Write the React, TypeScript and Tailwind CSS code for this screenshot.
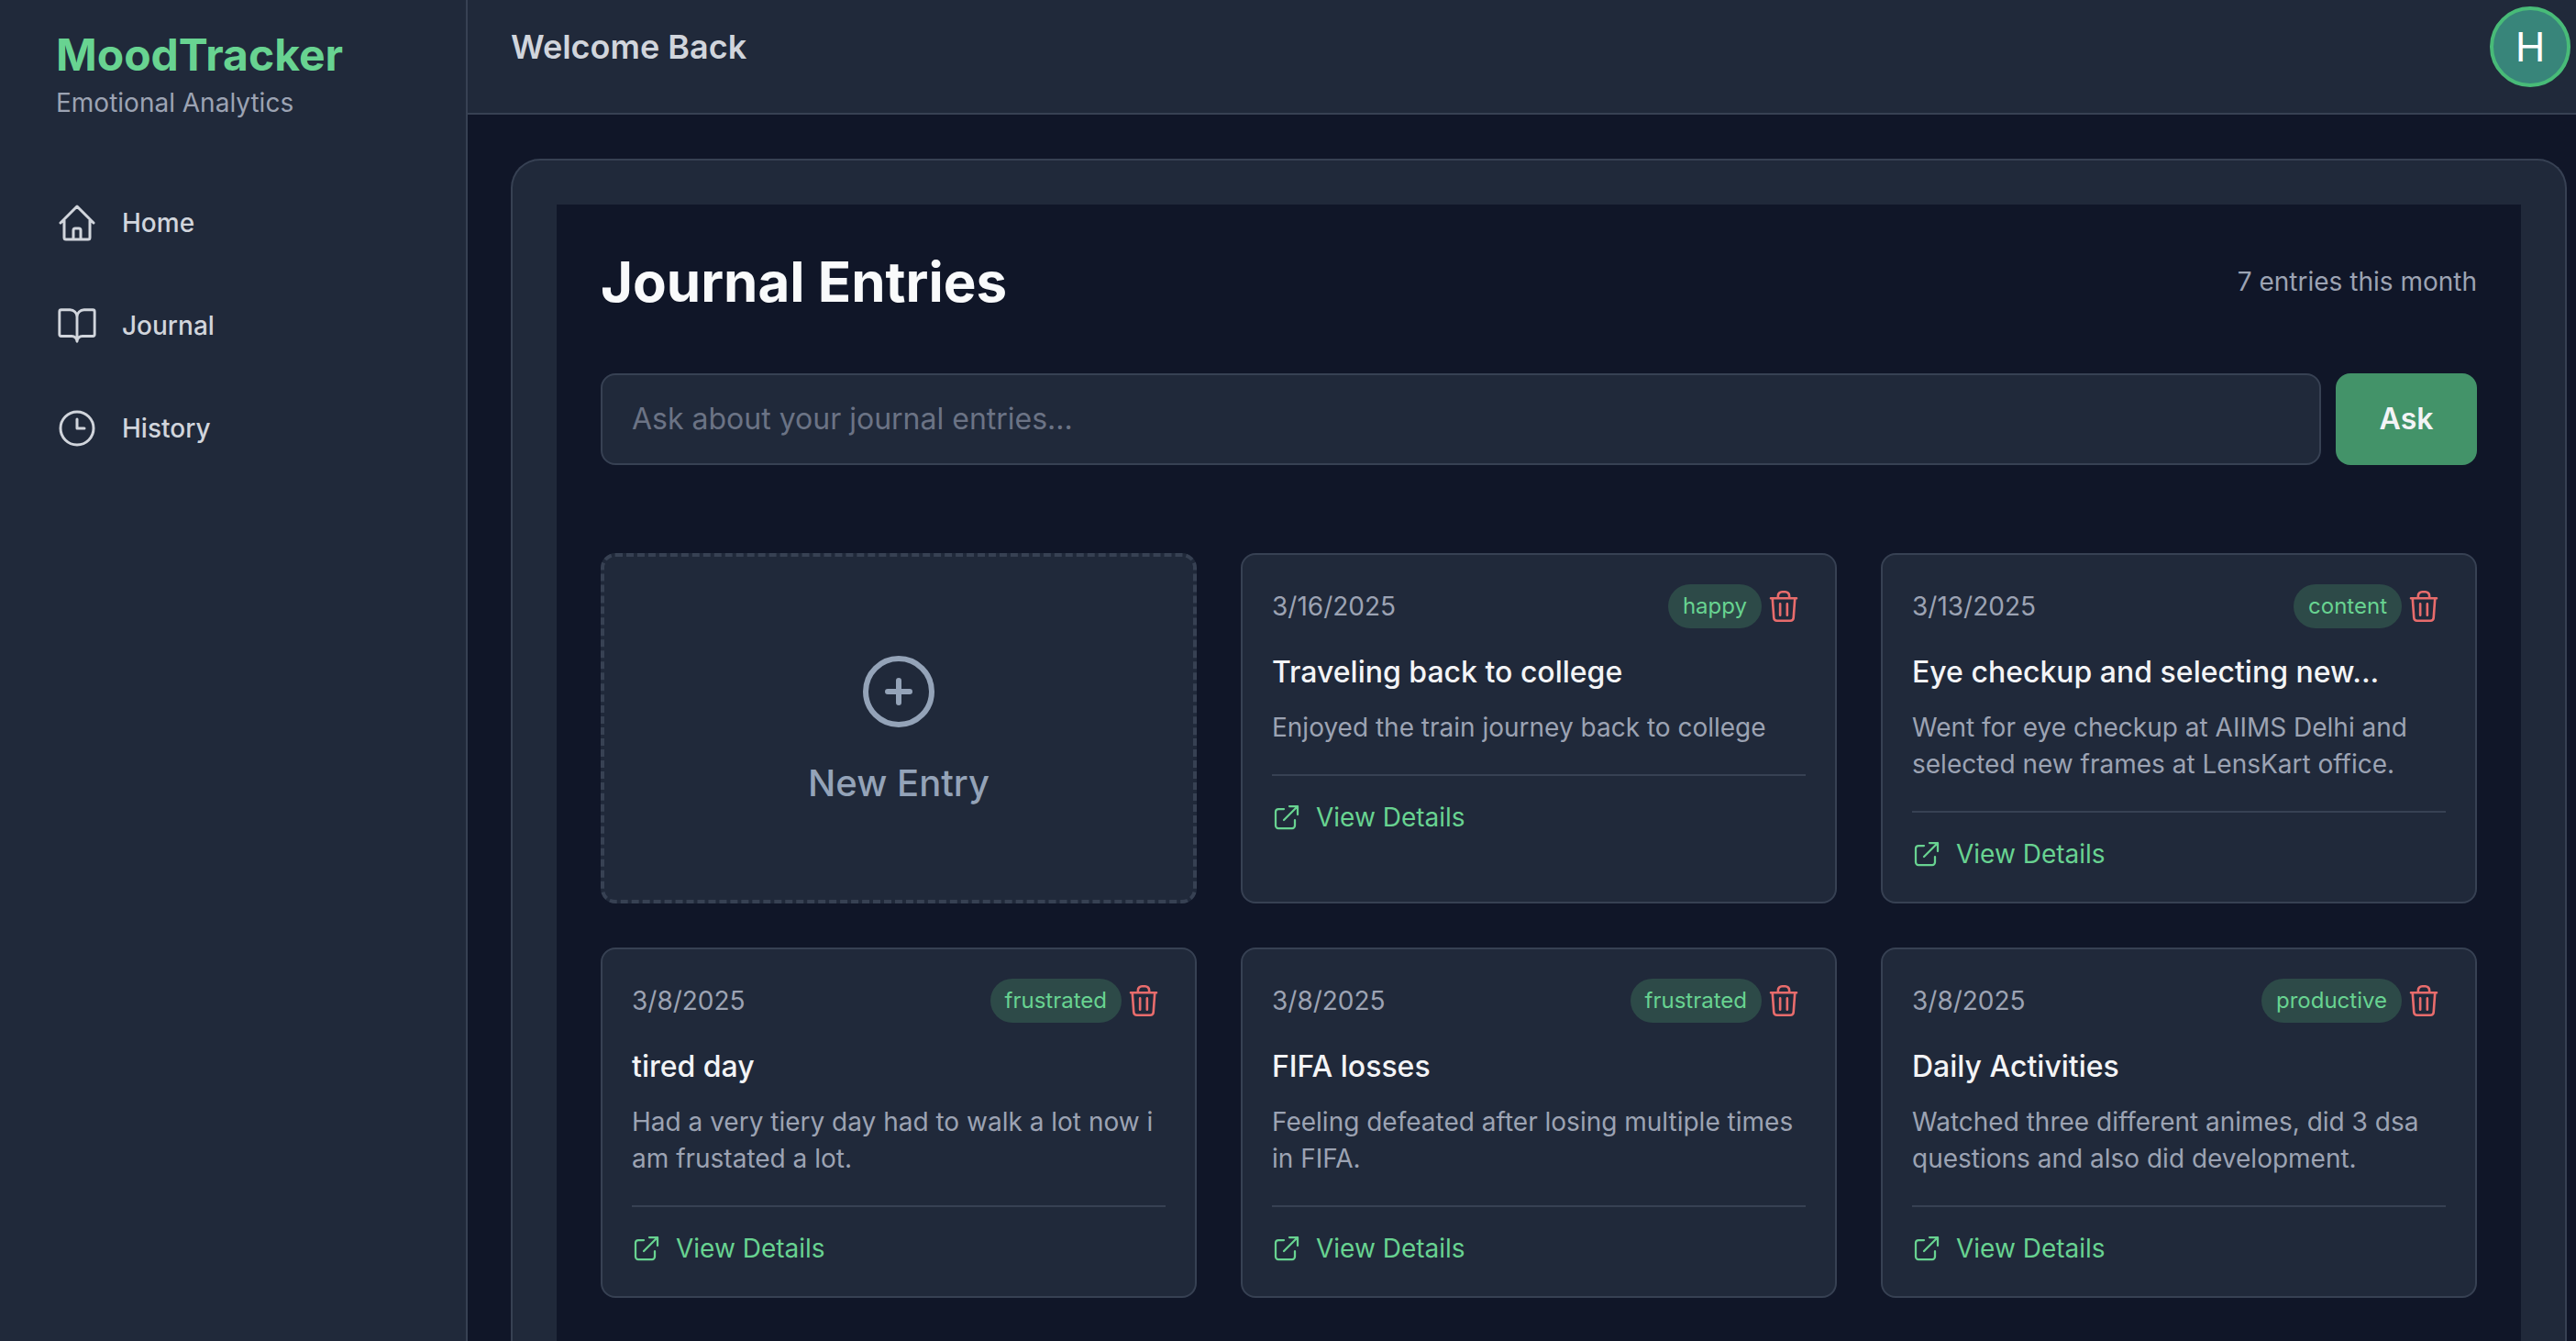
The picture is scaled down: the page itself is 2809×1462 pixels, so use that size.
const font = "font-['Inter','Liberation_Sans',sans-serif]"

interface Entry {
  date: string
  mood: string
  title: string
  text: string
}

const entries: Entry[] = [
  {
    date: '3/16/2025',
    mood: 'happy',
    title: 'Traveling back to college',
    text: 'Enjoyed the train journey back to college',
  },
  {
    date: '3/13/2025',
    mood: 'content',
    title: 'Eye checkup and selecting new...',
    text: 'Went for eye checkup at AIIMS Delhi and selected new frames at LensKart office.',
  },
  {
    date: '3/8/2025',
    mood: 'frustrated',
    title: 'tired day',
    text: 'Had a very tiery day had to walk a lot now i am frustated a lot.',
  },
  {
    date: '3/8/2025',
    mood: 'frustrated',
    title: 'FIFA losses',
    text: 'Feeling defeated after losing multiple times in FIFA.',
  },
  {
    date: '3/8/2025',
    mood: 'productive',
    title: 'Daily Activities',
    text: 'Watched three different animes, did 3 dsa questions and also did development.',
  },
]

const icons = {
  home: 'M3 12l2-2m0 0l7-7 7 7M5 10v10a1 1 0 001 1h3m10-11l2 2m-2-2v10a1 1 0 01-1 1h-3m-6 0a1 1 0 001-1v-4a1 1 0 011-1h2a1 1 0 011 1v4a1 1 0 001 1m-6 0h6',
  book: 'M12 7v14M3 18a1 1 0 0 1-1-1V4a1 1 0 0 1 1-1h5a4 4 0 0 1 4 4 4 4 0 0 1 4-4h5a1 1 0 0 1 1 1v13a1 1 0 0 1-1 1h-6a3 3 0 0 0-3 3 3 3 0 0 0-3-3z',
  clock: 'M12 7v5h4M21 12a9 9 0 11-18 0 9 9 0 0118 0z',
  trash: 'M19 7l-.867 12.142A2 2 0 0116.138 21H7.862a2 2 0 01-1.995-1.858L5 7M9.8 10.5v7m4.4-7v7M15.5 7V5.5A2.5 2.5 0 0013 3h-2a2.5 2.5 0 00-2.5 2.5V7M4 7h16',
  external: 'M10 6H6a2 2 0 00-2 2v10a2 2 0 002 2h10a2 2 0 002-2v-4M14 4h6m0 0v6m0-6L10 14',
  plus: 'M12 9v3m0 0v3m0-3h3m-3 0H9m12 0a9 9 0 11-18 0 9 9 0 0118 0z',
}

function Icon({ d, size, className }: { d: string; size: number; className?: string }) {
  return (
    <svg
      width={size}
      height={size}
      viewBox="0 0 24 24"
      fill="none"
      stroke="currentColor"
      strokeWidth={1.5}
      strokeLinecap="round"
      strokeLinejoin="round"
      className={className}
    >
      <path d={d} />
    </svg>
  )
}

const navItems = [
  { label: 'Home', icon: icons.home, size: 48 },
  { label: 'Journal', icon: icons.book, size: 46 },
  { label: 'History', icon: icons.clock, size: 48 },
]

function EntryCard({ entry }: { entry: Entry }) {
  return (
    <div className="rounded-[16px] border-2 border-[#374153] bg-[#20293a] px-[32px] pt-[32px] pb-[32px]">
      <div className="flex h-[48px] items-center justify-between">
        <span className="text-[28px] text-[#9ca3b3]">{entry.date}</span>
        <div className="flex items-center gap-[3px] pr-[3px]">
          <span className="rounded-full bg-[#2d4a48] px-[16px] py-[8px] text-[24px] leading-[32px] text-[#68d391]">
            {entry.mood}
          </span>
          <Icon d={icons.trash} size={42} className="text-[#e86c6c]" />
        </div>
      </div>
      <h3 className="mt-[20px] text-[32px] leading-[56px] font-medium text-gray-100">{entry.title}</h3>
      <p className="mt-[12px] text-[28px] leading-[40px] text-[#9ca3b3]">{entry.text}</p>
      <div className="mt-[31px] border-t-2 border-[#374153] pt-[25px]">
        <div className="flex items-center gap-[14px] text-[28px] leading-[40px] text-[#68d391]">
          <Icon d={icons.external} size={36} className="-ml-[2px]" />
          View Details
        </div>
      </div>
    </div>
  )
}

export default function App() {
  return (
    <div className={`flex h-screen overflow-hidden bg-[#101628] ${font}`}>
      <aside className="w-[510px] shrink-0 border-r-2 border-[#374153] bg-[#20293a]">
        <div className="px-[61px] pt-[32px]">
          <h1 className="text-[48px] leading-[56px] font-bold text-[#68d391]">MoodTracker</h1>
          <p className="mt-[4px] text-[28px] leading-[40px] text-[#9ca3b3]">Emotional Analytics</p>
        </div>
        <nav className="mt-[79px] flex flex-col gap-[48px] px-[60px]">
          {navItems.map((item) => (
            <div key={item.label} className="flex h-[64px] items-center text-gray-300">
              <div className="flex w-[48px] justify-center">
                <Icon d={item.icon} size={item.size} />
              </div>
              <span className="ml-[25px] text-[28px] font-medium">{item.label}</span>
            </div>
          ))}
        </nav>
      </aside>
      <div className="flex min-w-0 flex-1 flex-col">
        <header className="flex h-[125px] shrink-0 items-start justify-between border-b-2 border-[#374153] bg-[#20293a] pr-[6px] pl-[47px]">
          <h2 className="mt-[27px] text-[36px] leading-[48px] font-semibold text-gray-300">Welcome Back</h2>
          <div className="mt-[7px] flex h-[88px] w-[88px] items-center justify-center rounded-full border-4 border-[#48bb78] bg-[#38857a] text-[44px] text-white">
            H
          </div>
        </header>
        <main className="flex-1 pt-[48px] pr-[10px] pl-[47px]">
          <div className="rounded-t-[32px] border-2 border-b-0 border-[#374153] bg-[#20293a] px-[48px] pt-[48px]">
            <div className="bg-[#101628] p-[48px] pb-[96px]">
              <div className="flex items-center justify-between">
                <h2 className="text-[60px] leading-[72px] font-bold text-gray-50">Journal Entries</h2>
                <span className="text-[28px] text-[#9ca3b3]">7 entries this month</span>
              </div>
              <div className="mt-[64px] flex gap-[16px]">
                <div className="flex h-[100px] flex-1 items-center rounded-[16px] border-2 border-[#374153] bg-[#20293a] px-[32px] text-[32px] text-[#6b7385]">
                  Ask about your journal entries...
                </div>
                <button className="h-[100px] w-[154px] rounded-[16px] bg-[#439369] text-[32px] font-semibold text-gray-100">
                  Ask
                </button>
              </div>
              <div className="mt-[96px] grid grid-cols-3 gap-[48px]">
                <div className="flex flex-col items-center justify-center rounded-[16px] border-4 border-dashed border-[#374153] bg-[#20293a] text-[#94a3b8]">
                  <Icon d={icons.plus} size={96} />
                  <span className="mt-[24px] text-[40px] leading-[56px] font-medium">New Entry</span>
                </div>
                {entries.map((entry, i) => (
                  <EntryCard key={i} entry={entry} />
                ))}
              </div>
            </div>
          </div>
        </main>
      </div>
    </div>
  )
}
